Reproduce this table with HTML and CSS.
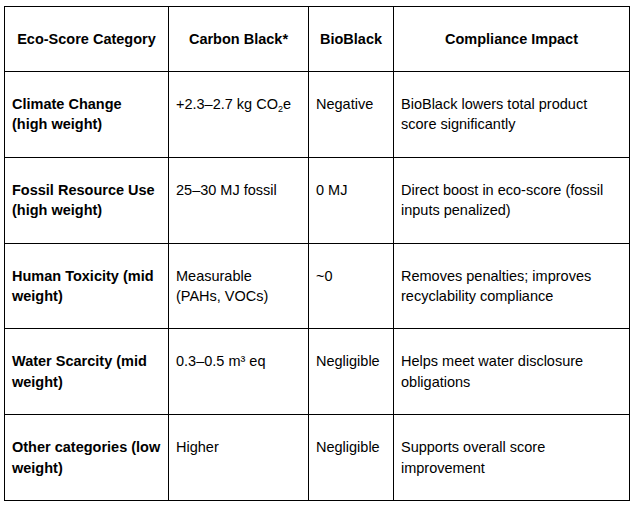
FILE: index.html
```html
<!DOCTYPE html>
<html>
<head>
<meta charset="utf-8">
<link rel="stylesheet" href="styles.css">
</head>
<body>
<table class="eco">
  <colgroup>
    <col class="c1"><col class="c2"><col class="c3"><col class="c4">
  </colgroup>
  <thead>
    <tr>
      <th>Eco-Score Category</th>
      <th>Carbon Black*</th>
      <th>BioBlack</th>
      <th>Compliance Impact</th>
    </tr>
  </thead>
  <tbody>
    <tr>
      <td class="cat">Climate Change<br>(high weight)</td>
      <td>+2.3–2.7 kg CO<sub>2</sub>e</td>
      <td>Negative</td>
      <td>BioBlack lowers total product<br>score significantly</td>
    </tr>
    <tr>
      <td class="cat">Fossil Resource Use<br>(high weight)</td>
      <td>25–30 MJ fossil</td>
      <td>0 MJ</td>
      <td>Direct boost in eco-score (fossil<br>inputs penalized)</td>
    </tr>
    <tr>
      <td class="cat">Human Toxicity (mid<br>weight)</td>
      <td>Measurable<br>(PAHs, VOCs)</td>
      <td>~0</td>
      <td>Removes penalties; improves<br>recyclability compliance</td>
    </tr>
    <tr>
      <td class="cat">Water Scarcity (mid<br>weight)</td>
      <td>0.3–0.5 m³ eq</td>
      <td>Negligible</td>
      <td>Helps meet water disclosure<br>obligations</td>
    </tr>
    <tr>
      <td class="cat">Other categories (low<br>weight)</td>
      <td>Higher</td>
      <td>Negligible</td>
      <td>Supports overall score<br>improvement</td>
    </tr>
  </tbody>
</table>
</body>
</html>
```

FILE: styles.css
```css
html, body {
  margin: 0;
  background: #ffffff;
}
body {
  padding: 6px 0 0 4px;
  font-family: "Liberation Sans", Arial, sans-serif;
  font-size: 14.5px;
  color: #000000;
}
.eco {
  border-collapse: collapse;
  table-layout: fixed;
  width: 625px;
}
.c1 { width: 164px; }
.c2 { width: 140px; }
.c3 { width: 85px; }
.c4 { width: 236px; }
.eco th, .eco td {
  border: 1px solid #000000;
  padding: 22px 7px 22px 7px;
  line-height: 20.4px;
  vertical-align: top;
  text-align: left;
  white-space: nowrap;
  overflow: hidden;
}
.eco th {
  font-weight: bold;
  text-align: center;
  padding-bottom: 21.6px;
}
.eco td.cat {
  font-weight: bold;
}
.eco sub {
  font-size: 9px;
  line-height: 0;
  vertical-align: -3px;
}
```
